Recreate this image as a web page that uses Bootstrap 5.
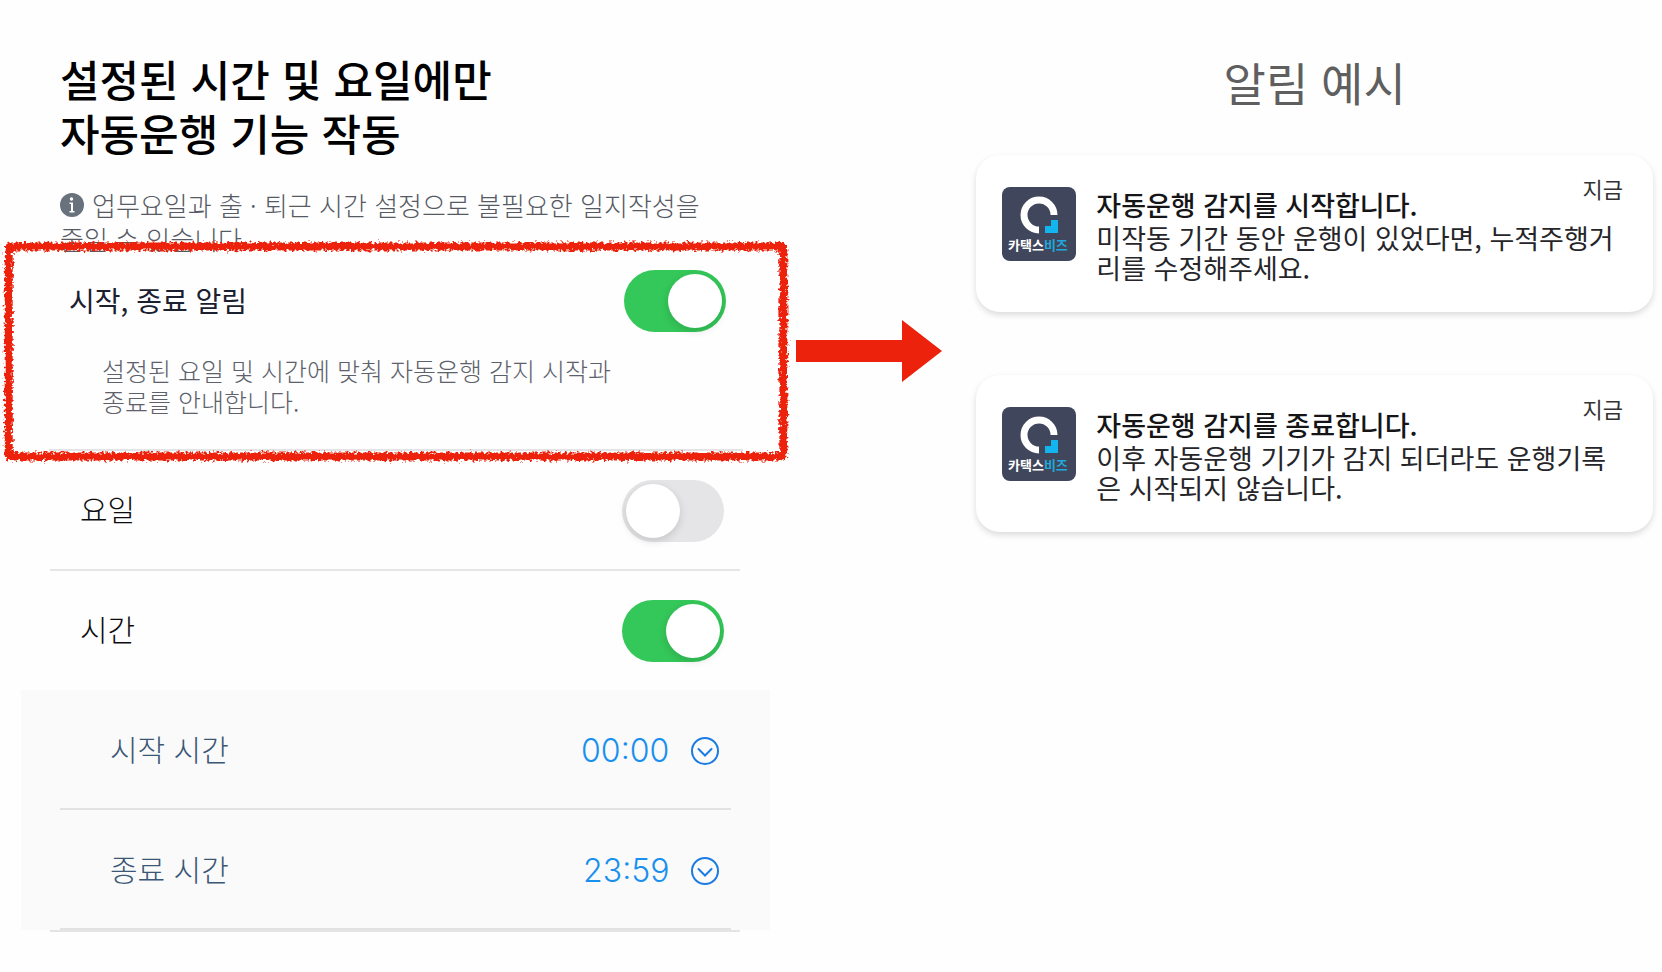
<!DOCTYPE html>
<html lang="ko">
<head>
<meta charset="utf-8">
<meta name="viewport" content="width=device-width, initial-scale=1">
<title>자동운행 알림 설정</title>
<link href="https://cdn.jsdelivr.net/npm/bootstrap@5.3.0/dist/css/bootstrap.min.css" rel="stylesheet">
<style>
  body { font-family: "Noto Sans CJK KR", sans-serif; color: #0c0c0e; background: #fefefe; }
  .board { display: grid; grid-template-columns: 47.9% 9.1% 1fr; }
  .page-title { font-size: 43px; line-height: 54px; font-weight: 500; color: #000; padding: 51px 56px 0 60px; }
  .hint { font-size: 26px; line-height: 34px; font-weight: 300; color: #555a64; padding: 0 56px 0 60px; margin-top: 29px; }
  .hint svg { width: 24px; height: 24px; vertical-align: -1px; margin-right: 8px; }
  .callout-box { margin: -14px 8px 0 4px; height: 219px; padding: 28px 62px 0 65px; }
  .callout-box .frame { position: absolute; inset: 0; width: 100%; height: 100%; overflow: visible; pointer-events: none; }
  .callout-box .faint-rule { position: absolute; left: 45px; right: 45px; bottom: 10px; height: 2px; background: #e4e4e7; }
  .callout-label { font-size: 28px; line-height: 40px; color: #1b2030; margin-top: 10px; }
  .callout-text { font-size: 25px; line-height: 31px; color: #5c616b; margin: 23px 0 0 33px; font-weight: 300; }
  .form-check-input.toggle { width: 102px; height: 62px; margin: 0; border: 0; border-radius: 31px; position: relative; flex: none;
    background: #e5e5e8; box-shadow: none; }
  .toggle::after { content: ""; position: absolute; top: 4px; left: 4px; width: 54px; height: 54px; border-radius: 50%; background: #fff;
    box-shadow: 0 3px 8px rgba(0,0,0,.14); }
  .toggle:checked { background: #34c759 !important; }
  .toggle:checked::after { left: 44px; }
  .form-check-input.toggle, .toggle:checked { background-image: none !important; }
  .option-row { height: 119px; margin: 0 56px 0 50px; padding: 0 16px 0 30px; font-size: 30px; font-weight: 300; }
  .option-row label, .time-row label { padding-bottom: 5px; }
  .option-row.ruled { height: 110px; padding-bottom: 8px; border-bottom: 2px solid #e5e5e8; }
  .times { background: #fafafa; margin: 0 26px 0 21px; }
  .time-row { height: 120px; margin: 0 39px; padding: 3px 11px 0 50px; border-bottom: 2px solid #e2e2e3; font-size: 30px; color: #3a5775; font-weight: 300; }
  .time-row select { appearance: none; border: 0; background: none; padding: 0; font: 300 32px/40px Inter, sans-serif; color: #1a90ee; }
  .time-row svg { width: 30px; height: 30px; margin-left: 20px; }
  .end-rule { height: 2px; margin: 0 56px 0 50px; background: #e4e4e6; }
  .pointer { padding-top: 320px; }
  .pointer svg { width: 146px; height: 62px; display: block; }
  .examples { padding: 0 9px 0 29px; }
  .examples h2 { font-size: 46px; line-height: 60px; font-weight: 400; color: #5f5f5f; margin: 51px 0 44px; }
  .notice { border-radius: 24px; background: #fff; height: 157px; margin-bottom: 63px; padding: 32px 30px 0 26px;
    box-shadow: 0 3px 6px rgba(0,0,0,.14); }
  .app-icon { width: 74px; height: 74px; flex: none; }
  .notice-text { margin-left: 20px; font-size: 27px; line-height: 30px; color: #26262a; }
  .notice-text h3 { font-size: 27px; line-height: 36px; font-weight: 500; margin: 0; color: #151518; }
  .stamp { position: absolute; top: 18px; right: 30px; font-size: 22px; line-height: 30px; color: #333; }
</style>
</head>
<body>
<svg width="0" height="0" class="position-absolute" aria-hidden="true">
  <defs>
    <filter id="crayon" x="-2%" y="-6%" width="104%" height="112%">
      <feTurbulence type="fractalNoise" baseFrequency="0.35" numOctaves="2" seed="4" result="grain"/>
      <feDisplacementMap in="SourceGraphic" in2="grain" scale="8" xChannelSelector="R" yChannelSelector="G"/>
    </filter>
    <symbol id="logo" viewBox="0 0 74 74">
      <rect width="74" height="74" rx="8" fill="#40465b"/>
      <path d="M37 43A15 15 0 1 1 52 28" fill="none" stroke="#fff" stroke-width="7"/>
      <path d="M49 33h7v13H43v-7h6z" fill="#12b5ee"/>
      <text x="6" y="63" font-size="13" font-weight="700" fill="#fff">카택스<tspan fill="#1fa9dc">비즈</tspan></text>
    </symbol>
    <symbol id="chevron" viewBox="0 0 30 30">
      <circle cx="15" cy="15" r="13" fill="none" stroke="#1c7be2" stroke-width="2"/>
      <path d="M8.500 13L15 19.500L21.500 13" fill="none" stroke="#1c7be2" stroke-width="2" stroke-linecap="round"/>
    </symbol>
  </defs>
</svg>

<main class="board">
  <section>
    <h1 class="page-title m-0">설정된 시간 및 요일에만<br>자동운행 기능 작동</h1>
    <p class="hint mb-0"><svg viewBox="0 0 24 24" aria-hidden="true"><circle cx="12" cy="12" r="12" fill="#68717c"/><circle cx="11.500" cy="6" r="1.700" fill="#fff"/><path d="M9.500 9.500H13v8.500h1.500v1.500h-5V18H11v-7H9.500z" fill="#fff"/></svg>업무요일과 출 · 퇴근 시간 설정으로 불필요한 일지작성을<br>줄일 수 있습니다.</p>

    <div class="callout-box position-relative">
      <div class="d-flex justify-content-between">
        <label class="callout-label" for="alert">시작, 종료 알림</label>
        <input class="form-check-input toggle" type="checkbox" role="switch" id="alert" checked>
      </div>
      <p class="callout-text mb-0">설정된 요일 및 시간에 맞춰 자동운행 감지 시작과<br>종료를 안내합니다.</p>
      <div class="faint-rule"></div>
      <svg class="frame" aria-hidden="true"><g filter="url(#crayon)"><rect width="98.800%" height="96%" x="0.600%" y="2%" rx="2" fill="none" stroke="#ec220d" stroke-width="8"/></g></svg>
    </div>

    <div class="option-row ruled d-flex align-items-center justify-content-between">
      <label for="days">요일</label>
      <input class="form-check-input toggle" type="checkbox" role="switch" id="days">
    </div>
    <div class="option-row d-flex align-items-center justify-content-between">
      <label for="hours">시간</label>
      <input class="form-check-input toggle" type="checkbox" role="switch" id="hours" checked>
    </div>
    <div class="times">
      <div class="time-row d-flex align-items-center">
        <label class="me-auto" for="from">시작 시간</label>
        <select id="from"><option>00:00</option></select>
        <svg aria-hidden="true"><use href="#chevron"/></svg>
      </div>
      <div class="time-row d-flex align-items-center">
        <label class="me-auto" for="to">종료 시간</label>
        <select id="to"><option>23:59</option></select>
        <svg aria-hidden="true"><use href="#chevron"/></svg>
      </div>
    </div>
    <div class="end-rule"></div>
  </section>

  <div class="pointer" aria-hidden="true">
    <svg viewBox="0 0 146 62"><path d="M0 20h106V0l40 31-40 31V42H0z" fill="#ec220d"/></svg>
  </div>

  <section class="examples">
    <h2 class="text-center">알림 예시</h2>
    <article class="notice position-relative d-flex">
      <svg class="app-icon" role="img" aria-label="카택스비즈"><use href="#logo"/></svg>
      <div class="notice-text">
        <h3>자동운행 감지를 시작합니다.</h3>
        <p class="mb-0">미작동 기간 동안 운행이 있었다면, 누적주행거<br>리를 수정해주세요.</p>
      </div>
      <span class="stamp">지금</span>
    </article>
    <article class="notice position-relative d-flex">
      <svg class="app-icon" role="img" aria-label="카택스비즈"><use href="#logo"/></svg>
      <div class="notice-text">
        <h3>자동운행 감지를 종료합니다.</h3>
        <p class="mb-0">이후 자동운행 기기가 감지 되더라도 운행기록<br>은 시작되지 않습니다.</p>
      </div>
      <span class="stamp">지금</span>
    </article>
  </section>
</main>
<script src="https://cdn.jsdelivr.net/npm/bootstrap@5.3.0/dist/js/bootstrap.bundle.min.js"></script>
</body>
</html>
